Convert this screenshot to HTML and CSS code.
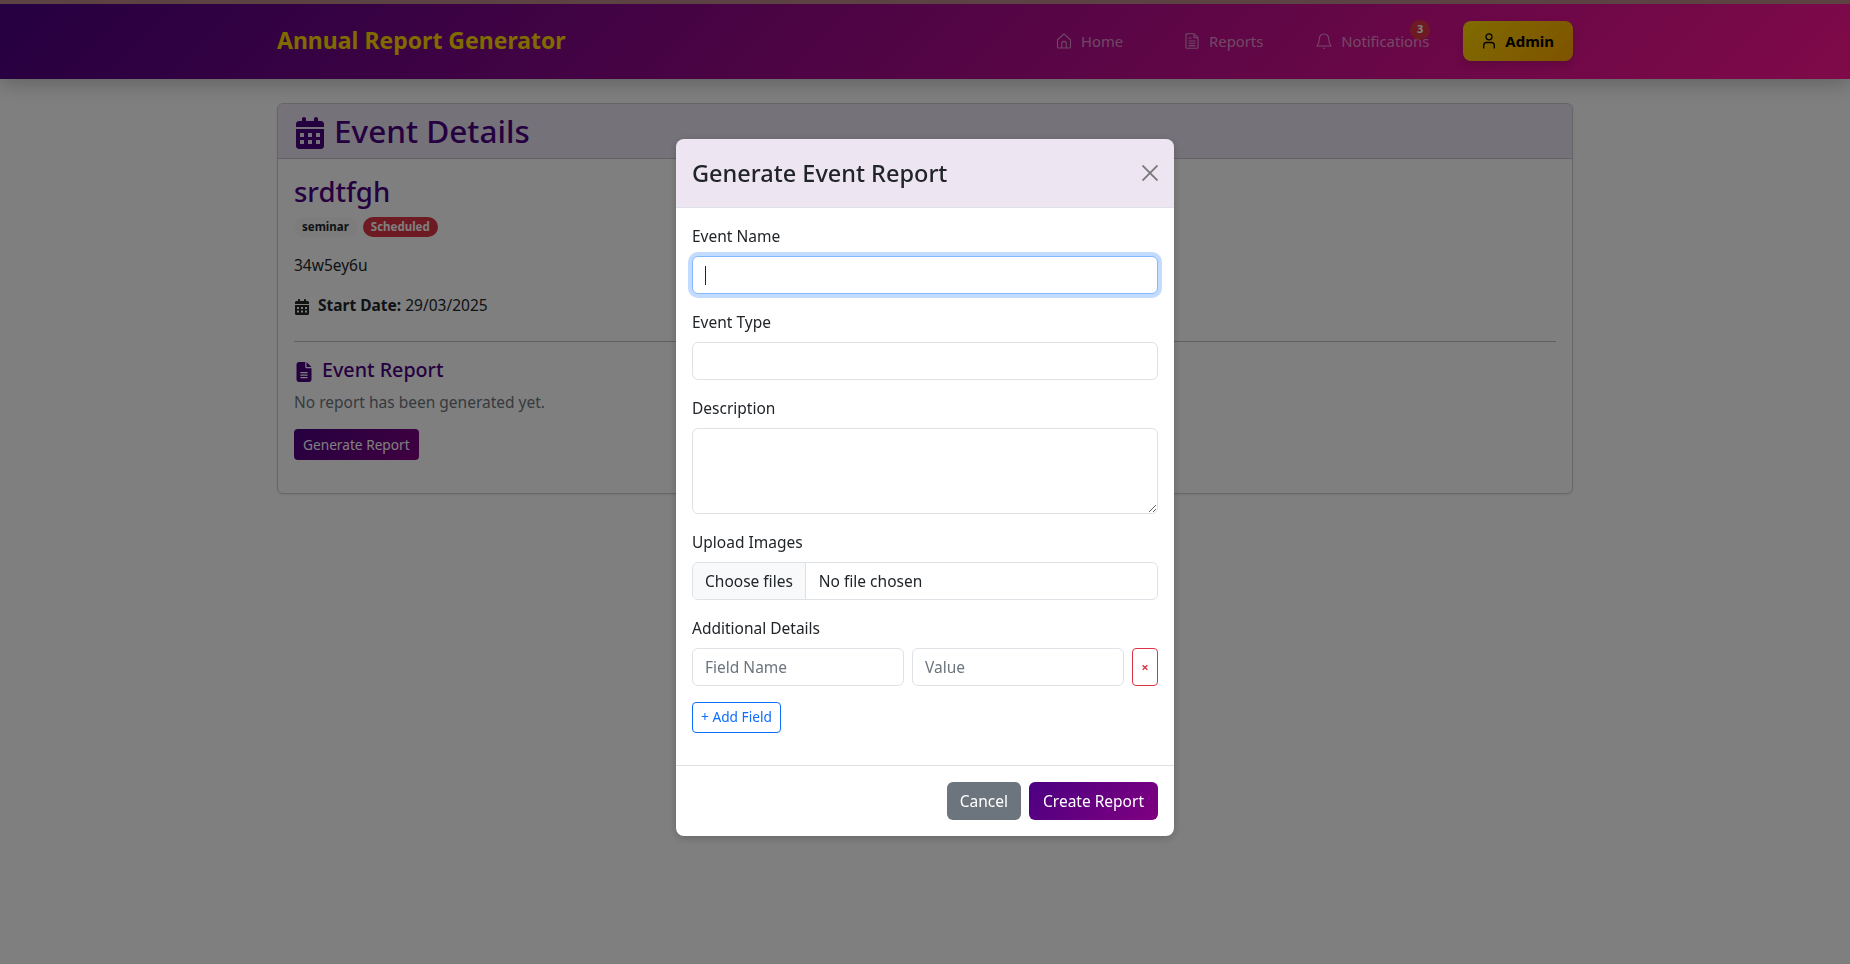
FILE: index.html
```html
<!DOCTYPE html>
<html lang="en">
<head>
    <meta charset="UTF-8">
    <title>Annual Report Generator</title>
    <link rel="stylesheet" href="styles.css">
</head>
<body>

    <!-- Navbar -->
    <nav class="navbar">
        <div class="container navbar-inner">
            <a class="brand" href="#">Annual Report Generator</a>
            <div class="nav-links">
                <a class="nav-link nav-link-home" href="#">
                    <svg class="nav-icon" viewBox="0 0 16 16"><path d="M8 1 1.500 6.800V14a1 1 0 0 0 1 1h11a1 1 0 0 0 1-1V6.800L8 1Z M5.700 15v-4.300a2.300 2.300 0 0 1 4.600 0V15"/></svg>
                    Home
                </a>
                <a class="nav-link nav-link-reports" href="#">
                    <svg class="nav-icon" viewBox="0 0 16 16"><path d="M3 .7h7l4 4v9.600a1 1 0 0 1-1 1H3a1 1 0 0 1-1-1V1.700a1 1 0 0 1 1-1Z M10 .7v4h4 M4.500 5h3 M4.500 8h7 M4.500 10.300h7 M4.500 12.600h7"/></svg>
                    Reports
                </a>
                <a class="nav-link nav-link-notify" href="#">
                    <svg class="nav-icon" viewBox="0 0 16 16"><path d="M8 1C5 1 3.300 3.300 3.300 6c0 3.200-.8 5.300-2.300 7h14c-1.500-1.700-2.300-3.800-2.300-7C12.700 3.300 11 1 8 1Z M7 15.300h2"/></svg>
                    Notifications
                    <span class="notify-badge">3</span>
                </a>
                <a class="admin-btn" href="#">
                    <svg class="admin-icon" viewBox="0 0 12 16"><circle cx="6" cy="3.800" r="3"/><path d="M.7 15.500v-3c0-1.800 1.300-3 3-3h4.600c1.700 0 3 1.200 3 3v3"/></svg>
                    Admin
                </a>
            </div>
        </div>
    </nav>

    <!-- Event page behind the modal -->
    <main class="container page">
        <section class="card">
            <div class="card-header">
                <h1 class="card-title">
                    <svg class="solid-icon title-icon" viewBox="0 0 448 512"><path d="M96 32v32H48C21.500 64 0 85.500 0 112v48h448v-48c0-26.500-21.500-48-48-48h-48V32c0-17.700-14.300-32-32-32s-32 14.300-32 32v32H160V32c0-17.700-14.300-32-32-32S96 14.300 96 32ZM448 192H0v272c0 26.500 21.500 48 48 48h352c26.500 0 48-21.500 48-48V192ZM64 256h64v64H64v-64Zm128 0h64v64h-64v-64Zm128 0h64v64h-64v-64ZM64 368h64v64H64v-64Zm128 0h64v64h-64v-64Zm128 0h64v64h-64v-64Z" fill-rule="evenodd"/></svg>
                    Event Details
                </h1>
            </div>
            <div class="card-body">
                <h2 class="event-name">srdtfgh</h2>
                <div class="badges">
                    <span class="badge badge-light">seminar</span>
                    <span class="badge badge-red">Scheduled</span>
                </div>
                <p class="event-desc">34w5ey6u</p>
                <p class="event-date">
                    <svg class="solid-icon date-icon" viewBox="0 0 448 512"><path d="M96 32v32H48C21.500 64 0 85.500 0 112v48h448v-48c0-26.500-21.500-48-48-48h-48V32c0-17.700-14.300-32-32-32s-32 14.300-32 32v32H160V32c0-17.700-14.300-32-32-32S96 14.300 96 32ZM448 192H0v272c0 26.500 21.500 48 48 48h352c26.500 0 48-21.500 48-48V192ZM64 256h64v64H64v-64Zm128 0h64v64h-64v-64Zm128 0h64v64h-64v-64ZM64 368h64v64H64v-64Zm128 0h64v64h-64v-64Zm128 0h64v64h-64v-64Z" fill-rule="evenodd"/></svg>
                    <span><strong>Start Date:</strong> 29/03/2025</span>
                </p>
                <hr class="divider">
                <h3 class="report-title">
                    <svg class="solid-icon report-icon" viewBox="0 0 384 512"><path d="M64 0C28.700 0 0 28.700 0 64v384c0 35.300 28.700 64 64 64h256c35.300 0 64-28.700 64-64V160H256c-17.700 0-32-14.300-32-32V0H64Zm192 0v128h128L256 0ZM112 256h160c8.800 0 16 7.200 16 16s-7.200 16-16 16H112c-8.800 0-16-7.200-16-16s7.200-16 16-16Zm0 64h160c8.800 0 16 7.200 16 16s-7.200 16-16 16H112c-8.800 0-16-7.200-16-16s7.200-16 16-16Zm0 64h160c8.800 0 16 7.200 16 16s-7.200 16-16 16H112c-8.800 0-16-7.200-16-16s7.200-16 16-16Z" fill-rule="evenodd"/></svg>
                    Event Report
                </h3>
                <p class="report-empty">No report has been generated yet.</p>
                <button class="generate-btn" type="button">Generate Report</button>
            </div>
        </section>
    </main>

    <!-- Modal -->
    <div class="backdrop"></div>
    <div class="modal">
        <div class="modal-header">
            <h4 class="modal-title">Generate Event Report</h4>
            <svg class="modal-close" viewBox="0 0 16 16"><path d="M.5.5l15 15M15.500.5l-15 15"/></svg>
        </div>
        <form class="modal-body">
            <label class="form-label" for="eventName">Event Name</label>
            <div class="form-control form-focus" id="eventName"><span class="caret"></span></div>

            <label class="form-label" for="eventType">Event Type</label>
            <input class="form-control" id="eventType" type="text">

            <label class="form-label" for="description">Description</label>
            <textarea class="form-control form-textarea" id="description"></textarea>

            <label class="form-label">Upload Images</label>
            <div class="form-control file-row">
                <span class="file-btn">Choose files</span>
                <span class="file-text">No file chosen</span>
            </div>

            <label class="form-label">Additional Details</label>
            <div class="detail-row">
                <input class="form-control" type="text" placeholder="Field Name">
                <input class="form-control" type="text" placeholder="Value">
                <button class="remove-btn" type="button">×</button>
            </div>
            <button class="add-btn" type="button">+ Add Field</button>
        </form>
        <div class="modal-footer">
            <button class="btn btn-cancel" type="button">Cancel</button>
            <button class="btn btn-create" type="button">Create Report</button>
        </div>
    </div>

</body>
</html>
```
FILE: styles.css
```css
* {
    box-sizing: border-box;
}

body {
    margin: 0;
    min-height: 100vh;
    background: #fff;
    color: #212529;
    font-family: "Noto Sans", sans-serif;
    font-size: 15.5px;
    line-height: 24px;
}

.container {
    width: 1320px;
    margin: 0 auto;
    padding: 0 12px;
}

/* Navbar */
.navbar {
    height: 79px;
    border-top: 4px solid #b98585;
    background: linear-gradient(135deg, #4b0082, #ff1493);
    box-shadow: 0 4px 20px rgba(0, 0, 0, 0.25);
}

.navbar-inner {
    display: flex;
    align-items: center;
    justify-content: space-between;
    height: 74px;
}

.brand {
    padding-bottom: 3px;
    color: #ffd700;
    font-size: 23px;
    font-weight: 700;
    text-decoration: none;
}

.nav-links {
    display: flex;
    align-items: center;
}

.nav-link {
    display: flex;
    align-items: center;
    gap: 9px;
    position: relative;
    padding: 0 8px;
    color: rgba(255, 255, 255, 0.55);
    font-size: 14.8px;
    text-decoration: none;
}

.nav-link-home {
    margin-right: 45px;
}

.nav-link-reports {
    margin-right: 37px;
}

.nav-link-notify {
    margin-right: 26px;
}

.nav-icon {
    width: 16px;
    height: 16px;
    fill: none;
    stroke: currentColor;
    stroke-width: 1.1;
}

.notify-badge {
    position: absolute;
    top: -9px;
    right: 7px;
    width: 20px;
    height: 20px;
    border-radius: 50%;
    background: #dc3545;
    color: #fff;
    font-size: 11px;
    font-weight: 700;
    line-height: 18px;
    text-align: center;
}

.admin-btn {
    display: flex;
    align-items: center;
    gap: 10px;
    height: 40px;
    padding: 0 19px 0 20px;
    border-radius: 8px;
    background: linear-gradient(135deg, #ffd700, #ffa500);
    box-shadow: 0 4px 10px rgba(0, 0, 0, 0.15);
    color: #000;
    font-weight: 700;
    font-size: 15px;
    text-decoration: none;
}

.admin-icon {
    width: 12px;
    height: 16px;
    fill: none;
    stroke: currentColor;
    stroke-width: 1.3;
}

/* Card */
.page {
    padding-top: 24px;
}

.card {
    border: 1px solid rgba(0, 0, 0, 0.2);
    border-radius: 6px;
    box-shadow: 0 1px 3px rgba(0, 0, 0, 0.08);
}

.card-header {
    height: 55px;
    padding: 0 16px;
    border-bottom: 1px solid rgba(0, 0, 0, 0.15);
    border-radius: 5px 5px 0 0;
    background: rgba(75, 0, 130, 0.1);
}

.card-title {
    display: flex;
    align-items: center;
    gap: 10px;
    margin: 0;
    color: #4b0082;
    font-size: 31.5px;
    font-weight: 500;
    line-height: 54px;
}

.solid-icon {
    fill: currentColor;
    flex: none;
}

.title-icon {
    width: 28px;
    height: 32px;
    margin: 4px 0 0 2px;
}

.card-body {
    padding: 16px 16px 33px;
}

.event-name {
    margin: 0 0 8px;
    color: #4b0082;
    font-size: 27.5px;
    font-weight: 500;
    line-height: 34px;
}

.badges {
    display: flex;
    gap: 6px;
    margin-bottom: 16px;
}

.badge {
    padding: 0 8px;
    border-radius: 10px;
    font-size: 11.5px;
    font-weight: 700;
    line-height: 20px;
}

.badge-light {
    background: #f8f9fa;
    color: #212529;
}

.badge-red {
    background: #dc3545;
    color: #fff;
}

.event-desc {
    margin: 0 0 16px;
}

.event-date {
    display: flex;
    align-items: center;
    gap: 9px;
    margin: 0;
}

.date-icon {
    width: 14px;
    height: 16px;
    margin: 3px 0 0 1px;
}

.divider {
    margin: 24px 0 16px;
    border: 0;
    border-top: 1px solid rgba(0, 0, 0, 0.25);
}

.report-title {
    display: flex;
    align-items: center;
    gap: 10px;
    margin: 0 0 8px;
    color: #4b0082;
    font-size: 19.7px;
    font-weight: 500;
    line-height: 24px;
}

.report-icon {
    width: 16px;
    height: 20px;
    margin: 4px 0 0 2px;
}

.report-empty {
    margin: 0 0 15px;
    color: #6c757d;
}

.generate-btn {
    display: block;
    height: 31px;
    padding: 0 9px;
    border: 0;
    border-radius: 4px;
    background: linear-gradient(135deg, #4b0082, #800080);
    color: #fff;
    font: 13.7px "Noto Sans", sans-serif;
}

/* Modal */
.backdrop {
    position: fixed;
    inset: 0;
    background: rgba(0, 0, 0, 0.5);
}

.modal {
    position: fixed;
    top: 139px;
    left: 676px;
    width: 498px;
    border-radius: 8px;
    background: #fff;
    box-shadow: 0 2px 8px rgba(0, 0, 0, 0.2);
    overflow: hidden;
}

.modal-header {
    display: flex;
    align-items: center;
    justify-content: space-between;
    height: 69px;
    padding: 0 16px;
    border-bottom: 1px solid #dee2e6;
    background: rgba(75, 0, 130, 0.1);
}

.modal-title {
    margin: 0;
    font-size: 23.5px;
    font-weight: 500;
}

.modal-close {
    width: 16px;
    height: 16px;
    stroke: #7a7a7a;
    stroke-width: 1.9;
    fill: none;
}

.modal-body {
    padding: 16px 16px 32px;
}

.form-label {
    display: block;
    margin-bottom: 8px;
}

.form-control {
    display: block;
    width: 100%;
    height: 38px;
    margin-bottom: 16px;
    padding: 6px 12px;
    border: 1px solid #dee2e6;
    border-radius: 6px;
    background: #fff;
    color: #212529;
    font: 15.5px/24px "Noto Sans", sans-serif;
}

.form-control::placeholder {
    color: #6c757d;
}

.form-focus {
    border-color: #86b7fe;
    box-shadow: 0 0 0 4px rgba(13, 110, 253, 0.25);
}

.caret {
    display: block;
    width: 1px;
    height: 19px;
    margin-top: 3px;
    background: #212529;
}

.form-textarea {
    height: 86px;
    resize: vertical;
}

.file-row {
    display: flex;
    align-items: center;
    padding: 0;
    overflow: hidden;
}

.file-btn {
    height: 100%;
    padding: 6px 12px;
    border-right: 1px solid #dee2e6;
    background: #f8f9fa;
}

.file-text {
    padding-left: 13px;
}

.detail-row {
    display: flex;
    gap: 8px;
    margin-bottom: 16px;
}

.detail-row .form-control {
    flex: 1;
    min-width: 0;
    margin-bottom: 0;
}

.remove-btn {
    flex: none;
    width: 26px;
    height: 38px;
    padding: 0;
    border: 1px solid #dc3545;
    border-radius: 4px;
    background: #fff;
    color: #dc3545;
    font: 700 13px "Noto Sans", sans-serif;
}

.add-btn {
    display: block;
    height: 31px;
    padding: 0 8px 2px;
    border: 1px solid #0d6efd;
    border-radius: 4px;
    background: #fff;
    color: #0d6efd;
    font: 13.7px "Noto Sans", sans-serif;
}

.modal-footer {
    display: flex;
    justify-content: flex-end;
    gap: 8px;
    padding: 16px;
    border-top: 1px solid #dee2e6;
}

.btn {
    height: 38px;
    padding: 0 13px;
    border: 0;
    border-radius: 6px;
    color: #fff;
    font: 15.5px "Noto Sans", sans-serif;
}

.btn-cancel {
    background: #6c757d;
}

.btn-create {
    padding: 0 14px;
    background: linear-gradient(135deg, #4b0082, #800080);
}
```
